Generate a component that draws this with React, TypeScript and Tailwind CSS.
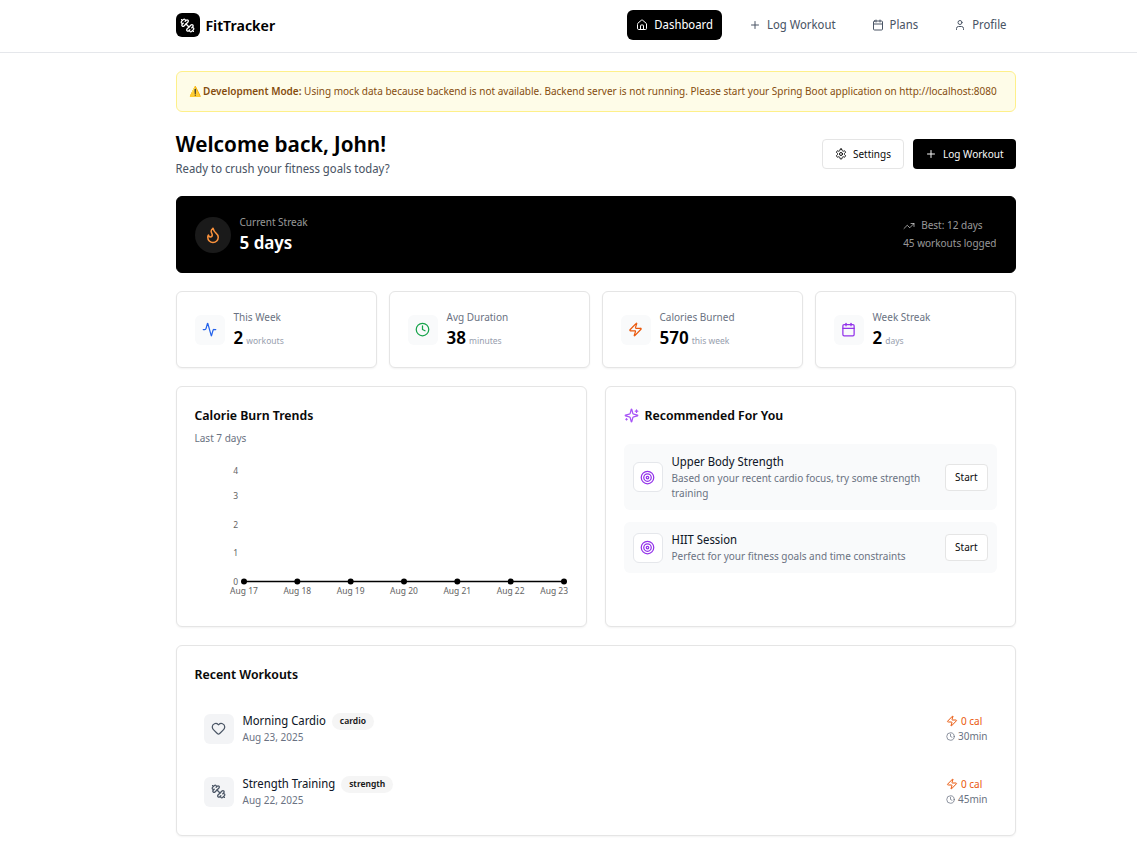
import type { ReactNode } from 'react';
import {
  Activity,
  Calendar,
  Clock,
  Flame,
  Heart,
  House,
  Plus,
  Target,
  TrendingUp,
  User,
  Zap,
} from 'lucide-react';

type Icon = (props: { className?: string }) => ReactNode;

const small = "font-['Noto_Sans',sans-serif] text-[10px] leading-[15px]";
const cardBox = 'rounded-md border border-[#e5e5e5] bg-white shadow-xs';

function Outline({ className, children }: { className?: string; children: ReactNode }) {
  return (
    <svg
      viewBox="0 0 24 24"
      className={className}
      fill="none"
      stroke="currentColor"
      strokeWidth="2"
      strokeLinecap="round"
      strokeLinejoin="round"
      aria-hidden="true"
    >
      {children}
    </svg>
  );
}

function Dumbbell({ className }: { className?: string }) {
  return (
    <Outline className={className}>
      <path d="M14.4 14.4 9.6 9.6" />
      <path d="M18.657 21.485a2 2 0 1 1-2.829-2.828l-1.767 1.768a2 2 0 1 1-2.829-2.829l6.364-6.364a2 2 0 1 1 2.829 2.829l-1.768 1.767a2 2 0 1 1 2.828 2.829z" />
      <path d="m21.5 21.5-1.4-1.4" />
      <path d="M3.9 3.9 2.5 2.5" />
      <path d="M6.404 12.768a2 2 0 1 1-2.829-2.829l1.768-1.767a2 2 0 1 1-2.828-2.829l2.828-2.828a2 2 0 1 1 2.829 2.828l1.767-1.768a2 2 0 1 1 2.829 2.829z" />
    </Outline>
  );
}

function Sparkles({ className }: { className?: string }) {
  return (
    <Outline className={className}>
      <path d="M9.937 15.5A2 2 0 0 0 8.5 14.063l-6.135-1.582a.5.5 0 0 1 0-.962L8.5 9.936A2 2 0 0 0 9.937 8.5l1.582-6.135a.5.5 0 0 1 .963 0L14.063 8.5A2 2 0 0 0 15.5 9.937l6.135 1.581a.5.5 0 0 1 0 .964L15.5 14.063a2 2 0 0 0-1.437 1.437l-1.582 6.135a.5.5 0 0 1-.963 0z" />
      <path d="M20 3v4" />
      <path d="M22 5h-4" />
      <path d="M4 17v2" />
      <path d="M5 18H3" />
    </Outline>
  );
}

function Gear({ className }: { className?: string }) {
  return (
    <Outline className={className}>
      <path d="M12.22 2h-.44a2 2 0 0 0-2 2v.18a2 2 0 0 1-1 1.73l-.43.25a2 2 0 0 1-2 0l-.15-.08a2 2 0 0 0-2.73.73l-.22.38a2 2 0 0 0 .73 2.73l.15.1a2 2 0 0 1 1 1.72v.51a2 2 0 0 1-1 1.74l-.15.09a2 2 0 0 0-.73 2.73l.22.38a2 2 0 0 0 2.73.73l.15-.08a2 2 0 0 1 2 0l.43.25a2 2 0 0 1 1 1.73V20a2 2 0 0 0 2 2h.44a2 2 0 0 0 2-2v-.18a2 2 0 0 1 1-1.73l.43-.25a2 2 0 0 1 2 0l.15.08a2 2 0 0 0 2.73-.73l.22-.39a2 2 0 0 0-.73-2.73l-.15-.08a2 2 0 0 1-1-1.74v-.5a2 2 0 0 1 1-1.74l.15-.09a2 2 0 0 0 .73-2.73l-.22-.38a2 2 0 0 0-2.73-.73l-.15.08a2 2 0 0 1-2 0l-.43-.25a2 2 0 0 1-1-1.73V4a2 2 0 0 0-2-2z" />
      <circle cx="12" cy="12" r="3" />
    </Outline>
  );
}

const navItems: { label: string; icon: Icon; active?: boolean }[] = [
  { label: 'Dashboard', icon: House as unknown as Icon, active: true },
  { label: 'Log Workout', icon: Plus as unknown as Icon },
  { label: 'Plans', icon: Calendar as unknown as Icon },
  { label: 'Profile', icon: User as unknown as Icon },
];

const stats: { label: string; value: string; unit: string; icon: Icon; color: string }[] = [
  { label: 'This Week', value: '2', unit: 'workouts', icon: Activity as unknown as Icon, color: 'text-[#2563eb]' },
  { label: 'Avg Duration', value: '38', unit: 'minutes', icon: Clock as unknown as Icon, color: 'text-[#16a34a]' },
  { label: 'Calories Burned', value: '570', unit: 'this week', icon: Zap as unknown as Icon, color: 'text-[#ea580c]' },
  { label: 'Week Streak', value: '2', unit: 'days', icon: Calendar as unknown as Icon, color: 'text-[#9333ea]' },
];

const recommendations = [
  { title: 'Upper Body Strength', text: 'Based on your recent cardio focus, try some strength training' },
  { title: 'HIIT Session', text: 'Perfect for your fitness goals and time constraints' },
];

const workouts: { title: string; tag: string; date: string; minutes: string; icon: Icon }[] = [
  { title: 'Morning Cardio', tag: 'cardio', date: 'Aug 23, 2025', minutes: '30min', icon: Heart as unknown as Icon },
  { title: 'Strength Training', tag: 'strength', date: 'Aug 22, 2025', minutes: '45min', icon: Dumbbell },
];

const days = ['Aug 17', 'Aug 18', 'Aug 19', 'Aug 20', 'Aug 21', 'Aug 22', 'Aug 23'];
const ticks = [
  { label: '4', y: 10 },
  { label: '3', y: 35 },
  { label: '2', y: 64 },
  { label: '1', y: 92 },
  { label: '0', y: 121 },
];

function CardTitle({ children }: { children: ReactNode }) {
  return (
    <h2 className="flex items-center gap-1.5 text-[13px] leading-[21px] font-semibold text-[#0a0a0a]">{children}</h2>
  );
}

function Header() {
  return (
    <header className="border-b border-gray-200 pl-[54px]">
      <div className="mx-auto flex max-w-[840px] items-center justify-between pt-[10px] pb-3">
        <a href="#home" className="flex items-center gap-1.5">
          <span className="flex size-6 items-center justify-center rounded-md bg-black">
            <Dumbbell className="size-[15px] text-white" />
          </span>
          <span className="text-[15px] leading-[21px] font-semibold">FitTracker</span>
        </a>
        <nav className="flex gap-[18px]">
          {navItems.map(({ label, icon: Icon, active }) => (
            <a
              key={label}
              href={`#${label.toLowerCase().replace(' ', '-')}`}
              className={`flex items-center gap-1.5 rounded-md px-[9px] py-1.5 text-[12px] leading-[18px] ${
                active ? 'bg-black text-white' : 'text-gray-600'
              }`}
            >
              <Icon className="size-3" />
              {label}
            </a>
          ))}
        </nav>
      </div>
    </header>
  );
}

function TrendChart() {
  const x = (i: number) => 49 + (i * 320) / 6;
  return (
    <svg viewBox="0 0 373 144" className="h-36 w-full" role="img" aria-label="Calorie burn trends">
      <g fill="#666666" fontSize="9">
        {ticks.map((t) => (
          <text key={t.label} x="43" y={t.y} textAnchor="end">
            {t.label}
          </text>
        ))}
        {days.map((d, i) => (
          <text
            key={d}
            x={i === days.length - 1 ? 373 : x(i)}
            y="130"
            textAnchor={i === days.length - 1 ? 'end' : 'middle'}
          >
            {d}
          </text>
        ))}
      </g>
      <line x1="49" y1="117.5" x2="369" y2="117.5" stroke="#000" strokeWidth="1.5" />
      {days.map((d, i) => (
        <circle key={d} cx={x(i)} cy="117.5" r="3" fill="#000" />
      ))}
    </svg>
  );
}

export default function App() {
  return (
    <div className="min-h-screen bg-white font-['Noto_Sans_Display','Noto_Sans',sans-serif] text-black">
      <Header />
      <main className="pl-[54px]">
        <div className="mx-auto flex max-w-[840px] flex-col gap-[18px] pt-[18px] pb-4">
          <div className={`rounded-md border border-[#fef08a] bg-[#fefce8] p-3 text-[#854d0e] ${small}`}>
            ⚠️ <strong className="font-semibold">Development Mode:</strong> Using mock data because backend is not
            available. Backend server is not running. Please start your Spring Boot application on
            http://localhost:8080
          </div>

          <section className="flex items-center justify-between">
            <div>
              <h1 className="text-[22px] leading-[27px] font-semibold">Welcome back, John!</h1>
              <p className="mt-[3px] text-[12px] leading-[18px] text-gray-600">
                Ready to crush your fitness goals today?
              </p>
            </div>
            <div className={`flex gap-[9px] ${small}`}>
              <button className="flex h-[30px] items-center gap-1.5 rounded-sm border border-[#e5e5e5] bg-white px-3 text-[#0a0a0a]">
                <Gear className="size-3" />
                Settings
              </button>
              <button className="flex h-[30px] items-center gap-1.5 rounded-sm bg-black px-3 text-[#fafafa]">
                <Plus className="size-3" />
                Log Workout
              </button>
            </div>
          </section>

          <section className="flex items-center justify-between rounded-md border border-black bg-black p-[18px] text-white">
            <div className="flex items-center gap-[9px]">
              <div className="flex size-9 items-center justify-center rounded-full bg-white/10">
                <Flame className="size-[18px] text-[#fb923c]" />
              </div>
              <div>
                <p className={`text-white/60 ${small}`}>Current Streak</p>
                <p className="text-[18px] leading-6 font-semibold">5 days</p>
              </div>
            </div>
            <div className={`flex flex-col gap-[3px] text-white/60 ${small}`}>
              <p className="flex items-center gap-1.5">
                <TrendingUp className="size-3" />
                Best: 12 days
              </p>
              <p>45 workouts logged</p>
            </div>
          </section>

          <section className="grid grid-cols-4 gap-3">
            {stats.map(({ label, value, unit, icon: Icon, color }) => (
              <div key={label} className={`flex items-center gap-[9px] p-[18px] ${cardBox}`}>
                <div className="flex size-[30px] items-center justify-center rounded-md bg-gray-50">
                  <Icon className={`size-[15px] ${color}`} />
                </div>
                <div>
                  <p className={`text-gray-500 ${small}`}>{label}</p>
                  <p className="flex items-baseline gap-[3px]">
                    <span className="text-[18px] leading-6 font-semibold">{value}</span>
                    <span className="text-[9px] leading-3 text-gray-400">{unit}</span>
                  </p>
                </div>
              </div>
            ))}
          </section>

          <section className="grid grid-cols-2 gap-[18px]">
            <div className={`p-[18px] ${cardBox}`}>
              <CardTitle>Calorie Burn Trends</CardTitle>
              <p className={`mt-[5px] mb-[18px] text-gray-500 ${small}`}>Last 7 days</p>
              <TrendChart />
            </div>
            <div className={`p-[18px] ${cardBox}`}>
              <CardTitle>
                <Sparkles className="size-[15px] text-[#a855f7]" />
                Recommended For You
              </CardTitle>
              <ul className="mt-[18px] flex flex-col gap-3">
                {recommendations.map((r) => (
                  <li key={r.title} className="flex items-center gap-[9px] rounded-md bg-gray-50 p-[9px]">
                    <div className="flex size-[30px] shrink-0 items-center justify-center rounded-md border border-gray-200 bg-white">
                      <Target className="size-[15px] text-[#9333ea]" />
                    </div>
                    <div className="flex-1">
                      <h3 className="text-[12px] leading-[18px] text-gray-900">{r.title}</h3>
                      <p className={`text-gray-500 ${small}`}>{r.text}</p>
                    </div>
                    <button
                      aria-label={`Start ${r.title}`}
                      className={`h-[27px] rounded-sm border border-[#e5e5e5] bg-white px-[9px] text-[#0a0a0a] ${small}`}
                    >
                      Start
                    </button>
                  </li>
                ))}
              </ul>
            </div>
          </section>

          <section className={`p-[18px] ${cardBox}`}>
            <CardTitle>Recent Workouts</CardTitle>
            <ul className="mt-[18px] flex flex-col gap-3">
              {workouts.map(({ title, tag, date, minutes, icon: Icon }) => (
                <li key={title} className="flex items-center gap-[9px] p-[9px]">
                  <div className="flex size-[30px] items-center justify-center rounded-md bg-gray-100">
                    <Icon className="size-[15px] text-gray-600" />
                  </div>
                  <div className="flex-1">
                    <div className="flex items-center gap-1.5">
                      <h3 className="text-[12px] leading-[18px] text-gray-900">{title}</h3>
                      <span className="flex h-[17px] items-center rounded-full bg-neutral-100 px-2 text-[9px] font-semibold text-[#171717]">
                        {tag}
                      </span>
                    </div>
                    <p className={`text-gray-500 ${small}`}>{date}</p>
                  </div>
                  <div className={small}>
                    <p className="flex items-center gap-[3px] text-[#ea580c]">
                      <Zap className="size-3" />0 cal
                    </p>
                    <p className="flex items-center gap-[3px] text-gray-500">
                      <Clock className="size-[9px]" />
                      {minutes}
                    </p>
                  </div>
                </li>
              ))}
            </ul>
          </section>
        </div>
      </main>
    </div>
  );
}
